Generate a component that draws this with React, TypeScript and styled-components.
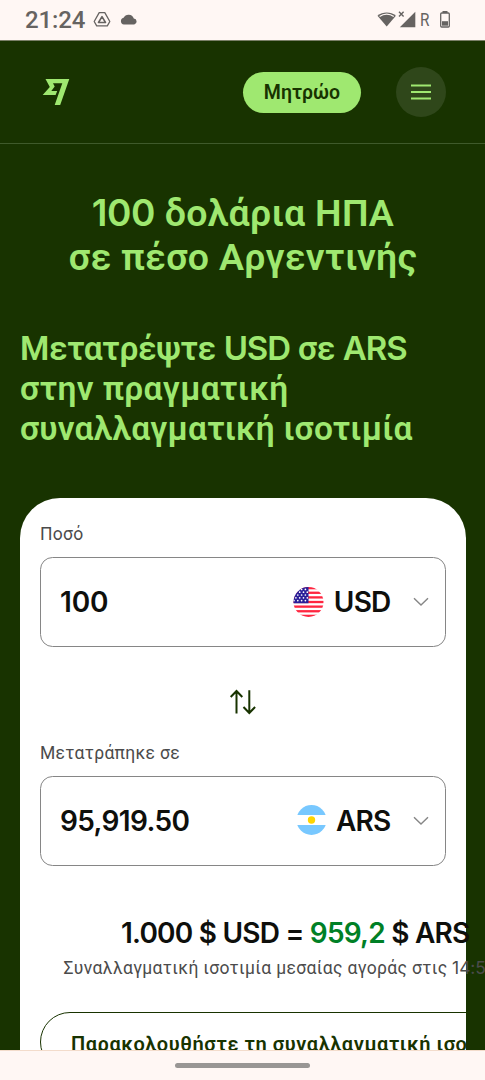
import React from "react";
import styled, { createGlobalStyle } from "styled-components";

const GlobalStyle = createGlobalStyle`
  *, *::before, *::after { box-sizing: border-box; }
  html, body { margin: 0; padding: 0; overflow: hidden; }
  body { background: #183300; font-family: Roboto, "Noto Sans", sans-serif; }
  svg { flex: none; }
`;

const Screen = styled.div`
  display: flex;
  flex-direction: column;
  width: 485px;
  height: 1080px;
  overflow: hidden;
  background: #183300;
`;

const StatusBar = styled.div`
  flex: none;
  display: flex;
  align-items: center;
  height: 41px;
  padding: 0 35px 1px 25px;
  background: #fff7f4;
  border-bottom: 1px solid #7a8068;
  color: #666361;
  font-family: Roboto, sans-serif;
`;

const Clock = styled.span`
  width: 60px;
  font-size: 24px;
  font-weight: 500;
  line-height: 40px;
  letter-spacing: -0.1px;
`;

const StatusIcons = styled.div<{ $end?: boolean }>`
  display: flex;
  align-items: center;
  height: 40px;
  margin-left: ${(p) => (p.$end ? "auto" : "8px")};
`;

const Roaming = styled.span`
  width: 20px;
  margin-left: 4px;
  font-size: 18px;
  line-height: 40px;
  transform: scaleX(0.85);
  transform-origin: left;
`;

const Header = styled.header`
  flex: none;
  display: flex;
  align-items: center;
  height: 103px;
  padding: 0 39px 0 42px;
  border-bottom: 1px solid #3f5a2b;
`;

const RegisterButton = styled.button`
  width: 118px;
  height: 41px;
  margin: 1px 35px 0 auto;
  padding: 1px 0 0;
  border: 0;
  border-radius: 21px;
  background: #9fe870;
  color: #183300;
  font: 600 19.5px/40px Roboto, sans-serif;
  letter-spacing: 0;
`;

const MenuButton = styled.button`
  display: flex;
  align-items: center;
  justify-content: center;
  width: 50px;
  height: 50px;
  margin-top: -1px;
  padding: 0;
  border: 0;
  border-radius: 50%;
  background: #2f471a;
`;

const Main = styled.main`
  flex: 1;
  min-height: 0;
  overflow: hidden;
  padding: 48px 0 0 20px;
`;

const Title = styled.h1`
  height: 87px;
  margin: 0 19px 0 0;
  color: #9fe870;
  font-size: 37.5px;
  font-weight: 600;
  line-height: 43.8px;
  text-align: center;
  white-space: nowrap;
`;

const Subtitle = styled.h2`
  height: 120px;
  margin: 50px 0 0;
  color: #9fe870;
  font-size: 33.5px;
  font-weight: 600;
  line-height: 40px;
  white-space: nowrap;
`;

const TextLine = styled.span<{ $spacing?: number }>`
  display: block;
  letter-spacing: ${(p) => p.$spacing ?? 0}px;
`;

const Latin = styled.span<{ $spacing?: number; $size?: string; $weight?: number }>`
  font-family: Inter, sans-serif;
  font-size: ${(p) => p.$size ?? "1em"};
  font-weight: ${(p) => p.$weight ?? 600};
  line-height: 1;
  letter-spacing: ${(p) => p.$spacing ?? -1.1}px;
`;

const Card = styled.section`
  width: 446px;
  height: 600px;
  margin-top: 49px;
  padding: 24px 20px 0;
  border-radius: 40px 40px 0 0;
  background: #fff;
`;

const Label = styled.label`
  display: block;
  height: 35px;
  color: #4b4b4b;
  font-size: 17.5px;
  line-height: 24px;
  letter-spacing: 0.3px;
  white-space: nowrap;
`;

const Field = styled.div`
  display: flex;
  align-items: center;
  height: 90px;
  padding: 0 16px 0 19px;
  border: 1px solid #868686;
  border-radius: 12.5px;
  color: #0e0f0c;
  font-family: Inter, sans-serif;
  font-size: 28px;
  font-weight: 600;
`;

const Amount = styled.span<{ $spacing: number }>`
  flex: 1;
  letter-spacing: ${(p) => p.$spacing}px;
`;

const Code = styled.span`
  margin: 0 22.5px 0 9.5px;
  letter-spacing: -0.8px;
`;

const SwapRow = styled.div`
  display: flex;
  align-items: center;
  justify-content: center;
  height: 93.5px;
  padding-top: 16.5px;
`;

const Rate = styled.div`
  width: max-content;
  margin: 49.5px 0 0 81px;
  color: #0e0f0c;
  font-family: Inter, sans-serif;
  font-size: 28px;
  font-weight: 600;
  line-height: 36px;
  letter-spacing: -0.78px;
  white-space: nowrap;
`;

const RateValue = styled.span`
  color: #008026;
`;

const RateNote = styled.div`
  height: 24px;
  margin: 4.5px 0 0 23.5px;
  color: #4b4b4b;
  font-size: 17.5px;
  line-height: 24px;
  letter-spacing: 0.34px;
  white-space: nowrap;
`;

const TrackButton = styled.button`
  width: 508px;
  height: 60px;
  margin-top: 32.5px;
  padding: 0 30px;
  border: 1px solid #183300;
  border-radius: 30px;
  background: transparent;
  color: #183300;
  font: 600 20px/62px Roboto, sans-serif;
  letter-spacing: 0.55px;
  text-align: left;
  white-space: nowrap;
`;

const NavBar = styled.div`
  flex: none;
  display: flex;
  align-items: center;
  justify-content: center;
  height: 30px;
  border-top: 1px solid #f3dccb;
  background: #fff7f4;
`;

const NavHandle = styled.div`
  width: 135px;
  height: 5px;
  margin-right: 1px;
  border-radius: 3px;
  background: #999694;
`;

const DriveIcon = () => (
  <svg width="18" height="17" viewBox="0 0 18 17" fill="none" stroke="#666361" strokeWidth="1.3" strokeLinejoin="round">
    <path d="M6.2 1.6h5.6l5 8.9-2.5 4.4H3.7L1.2 10.5z" />
    <path d="M9 5.7l3.5 5.8h-7z" strokeWidth="1.6" />
  </svg>
);

const CloudGlyph = styled.svg`
  margin-left: 9px;
`;

const CloudIcon = () => (
  <CloudGlyph width="18" height="11" viewBox="0 0 18 11" fill="#666361">
    <path d="M3.9 10.4A3.4 3.4 0 0 1 3.6 3.7 5.6 5.6 0 0 1 13.8 4.4a3.05 3.05 0 0 1 .5 6z" />
  </CloudGlyph>
);

const WifiIcon = () => (
  <svg width="20" height="17" viewBox="0 0 20 17">
    <path d="M.5 4.8c5.2-4.4 13.2-4.4 18.4 0L9.7 15.6z" fill="#666361" />
    <path d="M2.6 5.5c4.2-3.2 10-3.2 14.2 0" fill="none" stroke="#fff7f4" strokeWidth="1.3" />
  </svg>
);

const SignalIcon = () => (
  <svg width="19" height="17" viewBox="0 0 19 17">
    <path d="M18.3.8v15.4H2.8z" fill="#666361" />
    <path d="M2 .8l4.6 4.6M6.6.8L2 5.4" stroke="#666361" strokeWidth="1.4" />
  </svg>
);

const BatteryIcon = () => (
  <svg width="10" height="17" viewBox="0 0 10 17">
    <path d="M2.5 0h5v2h-5z" fill="#666361" />
    <rect x=".7" y="2" width="8.6" height="14" rx="1" fill="none" stroke="#666361" strokeWidth="1.3" />
    <path d="M2 10.2h6v4.5H2z" fill="#666361" />
  </svg>
);

const BrandMark = () => (
  <svg width="28" height="28" viewBox="0 0 28 28" fill="#9fe870">
    <path fillRule="evenodd" d="M3.5 1H27.3L18.2 27h-5.5L20.3 5.3H11L12.7 8.6 9.3 13H15.2L13.6 17H.7L7.8 9z" />
  </svg>
);

const MenuIcon = () => (
  <svg width="20" height="16" viewBox="0 0 20 16" stroke="#9fe870" strokeWidth="2">
    <path d="M0 1.5h20M0 8h20M0 14.5h20" />
  </svg>
);

const stripes = [0, 2, 4, 6, 8, 10, 12];

const UsFlag = () => (
  <svg width="31" height="31" viewBox="0 0 31 31">
    <clipPath id="us-round"><circle cx="15.5" cy="15" r="15" /></clipPath>
    <g clipPath="url(#us-round)">
      <path fill="#fff" d="M0 0h31v31H0z" />
      {stripes.map((n) => (
        <rect key={n} y={n * 2.31} width="31" height="2.31" fill="#ff2640" />
      ))}
      <path fill="#2b1f99" d="M0 0h15.5v16.2H0z" />
      {[2.4, 5.2, 8, 10.8, 13.6].map((y, r) =>
        [1.5, 5.3, 9.1, 12.9].map((x) => (
          <circle key={`${x}-${y}`} cx={x + (r % 2 ? 1.4 : -0.5)} cy={y} r=".85" fill="#fff" />
        ))
      )}
    </g>
  </svg>
);

const ArFlag = () => (
  <svg width="31" height="31" viewBox="0 0 31 31">
    <clipPath id="ar-round"><circle cx="15.5" cy="15" r="15" /></clipPath>
    <g clipPath="url(#ar-round)">
      <path fill="#fff" d="M0 0h31v31H0z" />
      <path fill="#78c8ff" d="M0 0h31v10H0zM0 20h31V31H0z" />
      <circle cx="15.5" cy="15" r="3.7" fill="#ffd500" />
    </g>
  </svg>
);

const Chevron = () => (
  <svg width="16" height="10" viewBox="0 0 16 10" fill="none" stroke="#868686" strokeWidth="1.4">
    <path d="M1 1.2l7 6.9 7-6.9" />
  </svg>
);

const SwapIcon = () => (
  <svg width="28" height="26" viewBox="0 0 28 26" fill="none" stroke="#183300" strokeWidth="2">
    <path d="M7.5 24.6V2M1.7 8l5.8-6 5.8 6M20.3 1.2V24M14.5 18l5.8 6 5.8-6" />
  </svg>
);

export default function App() {
  return (
    <Screen>
      <GlobalStyle />
      <StatusBar>
        <Clock>21:24</Clock>
        <StatusIcons>
          <DriveIcon />
          <CloudIcon />
        </StatusIcons>
        <StatusIcons $end>
          <WifiIcon />
          <SignalIcon />
          <Roaming>R</Roaming>
          <BatteryIcon />
        </StatusIcons>
      </StatusBar>
      <Header>
        <BrandMark />
        <RegisterButton>Μητρώο</RegisterButton>
        <MenuButton aria-label="Menu"><MenuIcon /></MenuButton>
      </Header>
      <Main>
        <Title>
          <TextLine $spacing={0.3}><Latin $size="37px" $spacing={-0.4}>100</Latin> δολάρια ΗΠΑ</TextLine>
          <TextLine $spacing={0.28}>σε πέσο Αργεντινής</TextLine>
        </Title>
        <Subtitle>
          <TextLine $spacing={-0.35}>Μετατρέψτε <Latin $size="33px">USD</Latin> σε <Latin $size="33px">ARS</Latin></TextLine>
          <TextLine $spacing={0.35}>στην πραγματική</TextLine>
          <TextLine $spacing={0.2}>συναλλαγματική ισοτιμία</TextLine>
        </Subtitle>
        <Card>
          <Label>Ποσό</Label>
          <Field>
            <Amount $spacing={-0.1}>100</Amount>
            <UsFlag />
            <Code>USD</Code>
            <Chevron />
          </Field>
          <SwapRow><SwapIcon /></SwapRow>
          <Label>Μετατράπηκε σε</Label>
          <Field>
            <Amount $spacing={-0.65}>95,919.50</Amount>
            <ArFlag />
            <Code>ARS</Code>
            <Chevron />
          </Field>
          <Rate>1.000 $ USD = <RateValue>959,2</RateValue> $ ARS</Rate>
          <RateNote>
            Συναλλαγματική ισοτιμία μεσαίας αγοράς στις <Latin $weight={400} $spacing={-0.1}>14:58</Latin>
          </RateNote>
          <TrackButton>Παρακολουθήστε τη συναλλαγματική ισοτιμία</TrackButton>
        </Card>
      </Main>
      <NavBar><NavHandle /></NavBar>
    </Screen>
  );
}
